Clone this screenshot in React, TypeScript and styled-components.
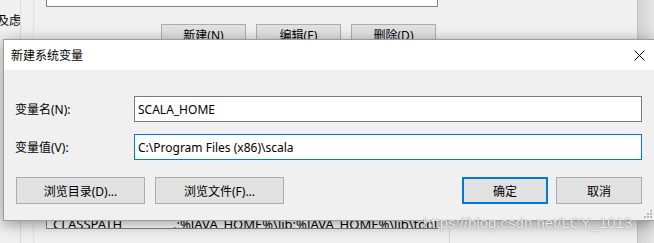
import React, { FC } from 'react';
import styled, { createGlobalStyle } from 'styled-components';

const GlobalStyle = createGlobalStyle`
    html, body {
        margin: 0;
        padding: 0;
        background: #f0f0f0;
    }
    body {
        font-family: 'Noto Sans', 'Noto Sans CJK SC', sans-serif;
        font-size: 12px;
        color: #000;
    }
`;

const App: FC = () => (
    <Desktop>
        <GlobalStyle />
        <BackWindow>
            <LeftStrip>
                <StripText>及虑</StripText>
            </LeftStrip>
            <Gutter />
            <Main>
                <ListTop />
                <BgButtons>
                    <BgButton>新建(N)</BgButton>
                    <BgButton>编辑(E)</BgButton>
                    <BgButton>删除(D)</BgButton>
                </BgButtons>
                <SysList>
                    <SysRow>
                        <VarName>CLASSPATH</VarName>
                        <VarValue>.;%JAVA_HOME%\lib;%JAVA_HOME%\lib\tools.jar</VarValue>
                    </SysRow>
                </SysList>
                <BottomArea>
                    <BottomSpacer />
                    <BottomDivider />
                </BottomArea>
            </Main>
            <RightShade />
        </BackWindow>

        <Dialog>
            <TitleBar>
                <Title>新建系统变量</Title>
                <CloseButton aria-label="关闭">
                    <svg width="11" height="11" viewBox="0 0 11 11">
                        <path d="M0.5 0.5 L10.5 10.5 M10.5 0.5 L0.5 10.5" stroke="#000" strokeWidth="1" fill="none" />
                    </svg>
                </CloseButton>
            </TitleBar>
            <Body>
                <Field>
                    <Label>变量名(N):</Label>
                    <Input value="SCALA_HOME" readOnly />
                </Field>
                <Field>
                    <Label>变量值(V):</Label>
                    <Input focused value="C:\Program Files (x86)\scala" readOnly />
                </Field>
                <Actions>
                    <Group>
                        <Button wide>浏览目录(D)...</Button>
                        <Button wide>浏览文件(F)...</Button>
                    </Group>
                    <Group tight>
                        <Button primary>确定</Button>
                        <Button>取消</Button>
                    </Group>
                </Actions>
            </Body>
            <Grip width="8" height="9" viewBox="0 0 8 9">
                <rect x="6" y="0" width="2" height="2" fill="#b8b8b8" />
                <rect x="3" y="3" width="2" height="2" fill="#b8b8b8" />
                <rect x="6" y="3" width="2" height="2" fill="#b8b8b8" />
                <rect x="0" y="6" width="2" height="2" fill="#b8b8b8" />
                <rect x="3" y="6" width="2" height="2" fill="#b8b8b8" />
                <rect x="6" y="6" width="2" height="2" fill="#b8b8b8" />
            </Grip>
        </Dialog>

        <Watermark>https://blog.csdn.net/LCY_1013</Watermark>
    </Desktop>
);

const Desktop = styled.div`
    position: relative;
    width: 654px;
    height: 243px;
    overflow: hidden;
    background: #f0f0f0;
`;

const BackWindow = styled.div`
    display: flex;
    height: 100%;
`;

const LeftStrip = styled.div`
    width: 20px;
    border-right: 1px solid #d9d9d9;
    overflow: hidden;
    padding-top: 12px;
`;

const StripText = styled.div`
    margin-left: -3px;
    white-space: nowrap;
    line-height: 17px;
`;

const Gutter = styled.div`
    width: 12px;
    border-right: 1px solid #e2e2e2;
`;

const Main = styled.div`
    width: 603px;
    border-right: 1px solid #c4c4c4;
    display: flex;
    flex-direction: column;
`;

const ListTop = styled.div`
    margin-left: 12px;
    width: 392px;
    height: 7px;
    box-sizing: border-box;
    background: #fff;
    border: 1px solid #828282;
    border-top: none;
`;

const BgButtons = styled.div`
    margin-top: 17px;
    margin-left: 12px;
    width: 390px;
    display: flex;
    justify-content: flex-end;
    gap: 10px;
`;

const BgButton = styled.div`
    width: 85px;
    height: 23px;
    box-sizing: border-box;
    border: 1px solid #adadad;
    background: #e1e1e1;
    text-align: center;
    line-height: 21px;
`;

const SysList = styled.div`
    margin-top: 8px;
    margin-left: 12px;
    width: 392px;
    height: 174px;
    box-sizing: border-box;
    background: #fff;
    border: 1px solid #828282;
    border-top: none;
    display: flex;
    flex-direction: column;
    justify-content: flex-end;
    overflow: hidden;
`;

const SysRow = styled.div`
    display: flex;
    height: 12px;
    line-height: 12px;
    margin-bottom: -2px;
    white-space: nowrap;
    font-size: 13px;
`;

const VarName = styled.span`
    flex: 0 0 auto;
    width: 120px;
    padding-left: 6px;
`;

const VarValue = styled.span`
    flex: 0 0 auto;
`;

const BottomArea = styled.div`
    flex: 1;
    display: flex;
`;

const BottomSpacer = styled.div`
    width: 415px;
`;

const BottomDivider = styled.div`
    border-left: 1px solid #d4d4d4;
`;

const RightShade = styled.div`
    flex: 1;
    background: linear-gradient(to right, #d2d2d2, #e4e4e4);
`;

const Dialog = styled.div`
    position: absolute;
    left: 3px;
    top: 39px;
    width: 651px;
    height: 182px;
    box-sizing: border-box;
    border: 1px solid #9d9d9d;
    border-right: none;
    background: #f0f0f0;
    box-shadow: 0 3px 14px rgba(0, 0, 0, 0.4);
    display: flex;
    flex-direction: column;
`;

const TitleBar = styled.div`
    height: 30px;
    background: #fff;
    display: flex;
    align-items: center;
    justify-content: space-between;
`;

const Title = styled.div`
    padding-left: 7px;
    font-size: 12px;
`;

const CloseButton = styled.div`
    width: 30px;
    height: 30px;
    display: flex;
    align-items: center;
    justify-content: center;
`;

const Body = styled.div`
    flex: 1;
    padding: 26px 11px 0 11px;
    display: flex;
    flex-direction: column;
    gap: 12px;
`;

const Field = styled.div`
    display: grid;
    grid-template-columns: 119px 508px;
    align-items: center;
`;

const Label = styled.label`
    font-size: 12px;
    white-space: nowrap;
`;

const Input = styled.input<{ focused?: boolean }>`
    height: 26px;
    box-sizing: border-box;
    margin: 0;
    padding: 0 3px;
    border: 1px solid ${({ focused }) => (focused ? '#0078d7' : '#7a7a7a')};
    outline: none;
    background: #fff;
    font-family: 'Noto Sans', 'Noto Sans CJK SC', sans-serif;
    font-size: 12px;
    color: #000;
`;

const Actions = styled.div`
    margin-top: 5px;
    display: flex;
    justify-content: space-between;
    padding-left: 1px;
    padding-right: 1px;
`;

const Group = styled.div<{ tight?: boolean }>`
    display: flex;
    gap: ${({ tight }) => (tight ? '8px' : '10px')};
`;

const Button = styled.div<{ wide?: boolean; primary?: boolean }>`
    width: ${({ wide }) => (wide ? '129px' : '86px')};
    height: 27px;
    box-sizing: border-box;
    border: ${({ primary }) => (primary ? '2px solid #0078d7' : '1px solid #adadad')};
    background: #e1e1e1;
    display: flex;
    align-items: center;
    justify-content: center;
    font-size: 12px;
`;

const Grip = styled.svg`
    position: absolute;
    right: 2px;
    bottom: 1px;
`;

const Watermark = styled.div`
    position: absolute;
    left: 423px;
    top: 214px;
    font-family: 'Liberation Sans', Arial, sans-serif;
    font-size: 15px;
    color: rgba(255, 255, 255, 0.85);
    text-shadow: 0 0 1px rgba(0, 0, 0, 0.35), 0 0 2px rgba(0, 0, 0, 0.15);
    white-space: nowrap;
`;

export default App;
